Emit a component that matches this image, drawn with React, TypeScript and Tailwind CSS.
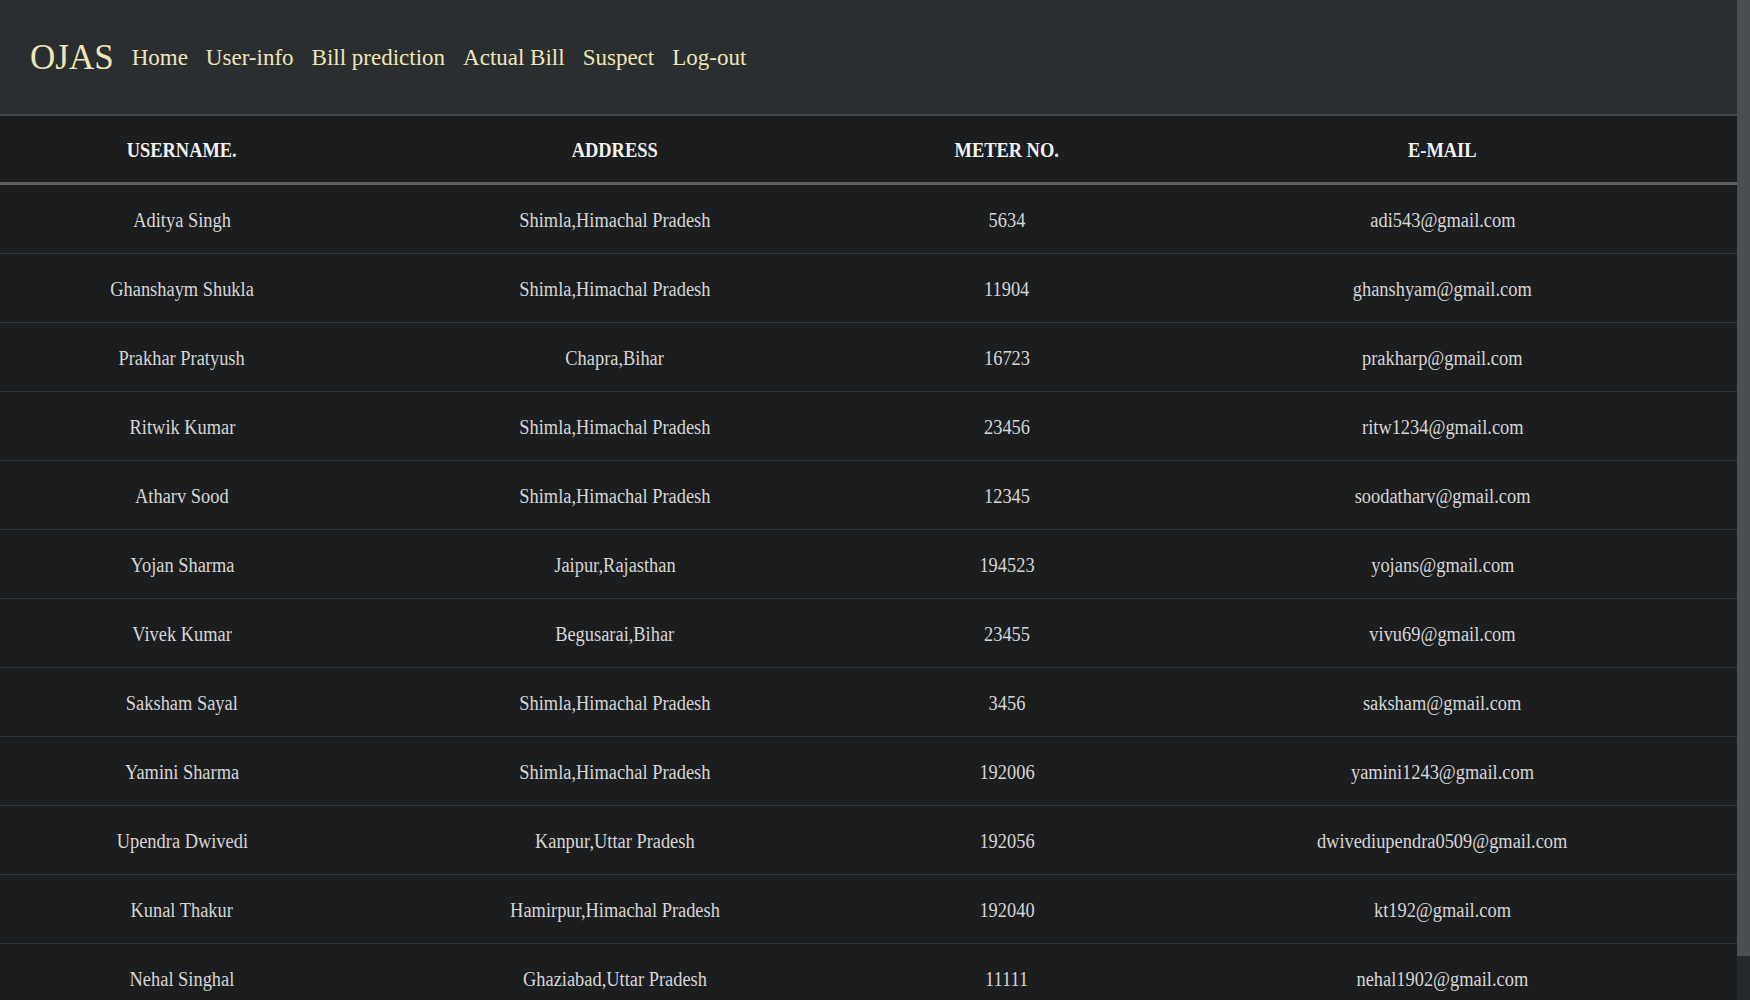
const links = ["Home", "User-info", "Bill prediction", "Actual Bill", "Suspect", "Log-out"]

const users = [
  { name: "Aditya Singh", address: "Shimla,Himachal Pradesh", meter: "5634", email: "adi543@gmail.com" },
  { name: "Ghanshaym Shukla", address: "Shimla,Himachal Pradesh", meter: "11904", email: "ghanshyam@gmail.com" },
  { name: "Prakhar Pratyush", address: "Chapra,Bihar", meter: "16723", email: "prakharp@gmail.com" },
  { name: "Ritwik Kumar", address: "Shimla,Himachal Pradesh", meter: "23456", email: "ritw1234@gmail.com" },
  { name: "Atharv Sood", address: "Shimla,Himachal Pradesh", meter: "12345", email: "soodatharv@gmail.com" },
  { name: "Yojan Sharma", address: "Jaipur,Rajasthan", meter: "194523", email: "yojans@gmail.com" },
  { name: "Vivek Kumar", address: "Begusarai,Bihar", meter: "23455", email: "vivu69@gmail.com" },
  { name: "Saksham Sayal", address: "Shimla,Himachal Pradesh", meter: "3456", email: "saksham@gmail.com" },
  { name: "Yamini Sharma", address: "Shimla,Himachal Pradesh", meter: "192006", email: "yamini1243@gmail.com" },
  { name: "Upendra Dwivedi", address: "Kanpur,Uttar Pradesh", meter: "192056", email: "dwivediupendra0509@gmail.com" },
  { name: "Kunal Thakur", address: "Hamirpur,Himachal Pradesh", meter: "192040", email: "kt192@gmail.com" },
  { name: "Nehal Singhal", address: "Ghaziabad,Uttar Pradesh", meter: "11111", email: "nehal1902@gmail.com" },
]

const cols = "grid grid-cols-[364px_502px_282px_1fr] items-center text-center"

// the screenshot's text is a bit narrow, squeeze glyphs horizontally
const Cell = ({ children }: { children: React.ReactNode }) => (
  <div className="pt-[1px]">
    <span className="inline-block scale-x-[0.92] whitespace-nowrap">{children}</span>
  </div>
)

export default function App() {
  return (
    <div className="flex h-[1000px] overflow-hidden bg-[#1c1d1f] font-['Liberation_Serif',serif]">
      <div className="flex-1 min-w-0">
        {/* navbar */}
        <nav className="flex h-[114px] items-center gap-[18px] bg-[#2b2e31] pl-[30px] pt-[1px] text-[#efe6b6]">
          <span className="text-[35px] leading-none">OJAS</span>
          {links.map((l) => (
            <a key={l} href="#" className="text-[23px] leading-none">
              {l}
            </a>
          ))}
        </nav>
        <div className="h-[2px] bg-[#45484b]" />

        {/* table */}
        <div className={`${cols} h-[66px] text-[20px] font-bold text-[#f2f2f2]`}>
          <Cell>USERNAME.</Cell>
          <Cell>ADDRESS</Cell>
          <Cell>METER NO.</Cell>
          <Cell>E-MAIL</Cell>
        </div>
        <div className="h-[3px] bg-[#5f6062]" />

        {users.map((u) => (
          <div
            key={u.name}
            className={`${cols} h-[69px] border-b border-[#323538] text-[20px] text-[#d6d6d6]`}
          >
            <Cell>{u.name}</Cell>
            <Cell>{u.address}</Cell>
            <Cell>{u.meter}</Cell>
            <Cell>{u.email}</Cell>
          </div>
        ))}
      </div>

      {/* scrollbar */}
      <div className="flex w-[13px] flex-col bg-[#26292b]">
        <div className="h-[956px] bg-[#4b4f52]" />
      </div>
    </div>
  )
}
